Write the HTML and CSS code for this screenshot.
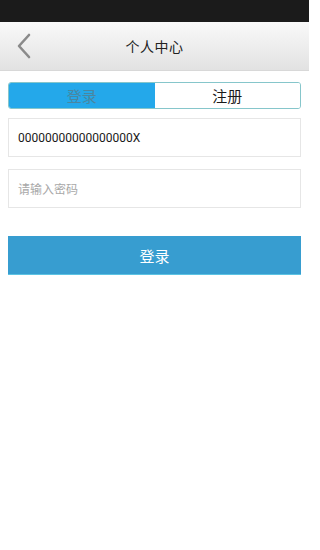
FILE: index.html
```html
<!DOCTYPE html>
<html lang="zh">
<head>
<meta charset="utf-8">
<meta name="viewport" content="width=309">
<title>个人中心</title>
<link rel="stylesheet" href="styles.css">
</head>
<body>
<div class="page">
<div class="statusbar"></div>
<header class="header">
  <span class="back">
    <svg width="16" height="26" viewBox="0 0 16 26"><polyline points="13,2 3,13 13,24" fill="none" stroke="#8a8a8a" stroke-width="2.6" stroke-linecap="round" stroke-linejoin="round"/></svg>
  </span>
  <h1 class="title">个人中心</h1>
</header>
<main class="content">
  <div class="tabs">
    <div class="tab active">登录</div>
    <div class="tab">注册</div>
  </div>
  <div class="field field-id">00000000000000000X</div>
  <div class="field field-pw placeholder">请输入密码</div>
  <button class="submit">登录</button>
</main>
</div>
</body>
</html>
```
FILE: styles.css
```css
html, body {
  margin: 0;
  padding: 0;
  background: #ffffff;
  font-family: Roboto, "Noto Sans CJK SC", sans-serif;
}
.page {
  width: 309px;
}
.statusbar {
  height: 22px;
  background: #1b1b1b;
}
.header {
  position: relative;
  height: 48px;
  background: linear-gradient(#f9f9f9, #e2e2e2);
  border-bottom: 1px solid #d8d8d8;
  display: flex;
  align-items: center;
  justify-content: center;
}
.back {
  position: absolute;
  left: 16px;
  top: 11px;
  display: flex;
}
.title {
  margin: 0;
  font-size: 14px;
  font-weight: normal;
  color: #222;
  letter-spacing: 0.5px;
}
.content {
  padding: 11px 8px 0 8px;
  display: flex;
  flex-direction: column;
}
.tabs {
  display: flex;
  height: 25px;
  border: 1px solid #86c6cb;
  border-radius: 3px;
  overflow: hidden;
}
.tab {
  flex: 1;
  display: flex;
  align-items: center;
  justify-content: center;
  font-size: 15px;
  color: #1a1a1a;
  background: #fff;
}
.tab.active {
  background: #24a8ea;
  color: #4a86a0;
}
.field {
  box-sizing: border-box;
  height: 39px;
  border: 1px solid #e6e6e6;
  display: flex;
  align-items: center;
  padding-left: 9px;
  font-size: 12px;
  color: #1a1a1a;
}
.field-id {
  margin-top: 9px;
}
.field-pw {
  margin-top: 12px;
}
.placeholder {
  color: #a8a8a8;
}
.submit {
  margin-top: 28px;
  height: 39px;
  border: none;
  border-bottom: 1px solid #5cc3e3;
  background: #379dd0;
  color: #ffffff;
  font-family: Roboto, "Noto Sans CJK SC", sans-serif;
  font-size: 15px;
  padding: 0;
}
```
